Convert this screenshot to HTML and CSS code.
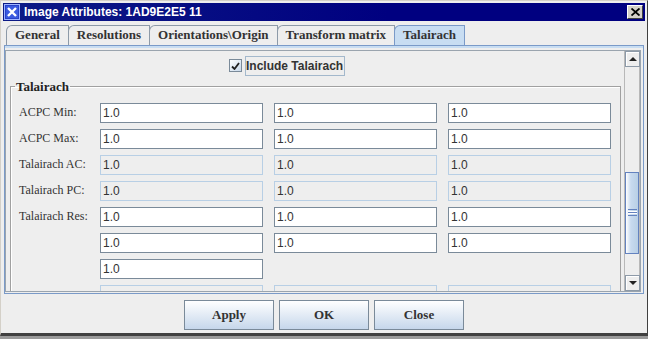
FILE: index.html
```html
<!DOCTYPE html>
<html lang="en">
<head>
    <meta charset="UTF-8">
    <title>Image Attributes</title>
    <link rel="stylesheet" href="styles.css">
</head>
<body>
    <div class="window">
        <!-- Title bar -->
        <div class="titlebar">
            <svg class="app-icon" width="16" height="16" viewBox="0 0 16 16">
                <rect x="0.5" y="0.5" width="15" height="15" fill="#2742c8" stroke="#9fb4ff"/>
                <rect x="2" y="2" width="12" height="12" fill="#3a5ae0"/>
                <path d="M4 4 L12 12 M12 4 L4 12" stroke="#fff" stroke-width="2.4"/>
            </svg>
            <span class="title">Image Attributes: 1AD9E2E5 11</span>
            <span class="close-btn">
                <svg width="9" height="8" viewBox="0 0 9 8">
                    <path d="M0.5 0.5 L8.5 7.5 M8.5 0.5 L0.5 7.5" stroke="#000" stroke-width="1.8"/>
                </svg>
            </span>
        </div>

        <!-- Tabs -->
        <div class="tabs">
            <div class="tab">General</div>
            <div class="tab">Resolutions</div>
            <div class="tab">Orientations\Origin</div>
            <div class="tab">Transform matrix</div>
            <div class="tab tab-active">Talairach</div>
        </div>

        <div class="tab-panel">
            <div class="scroll-pane">
                <div class="scroll-view">
                    <div class="check-row">
                        <span class="checkbox">
                            <svg width="9" height="8" viewBox="0 0 9 8">
                                <path d="M1 4.5 L3.5 7 L8 1" fill="none" stroke="#222" stroke-width="1.8"/>
                            </svg>
                        </span>
                        <span class="check-label">Include Talairach</span>
                    </div>

                    <fieldset class="group">
                        <legend>Talairach</legend>
                        <div class="field-grid">
                            <label>ACPC Min:</label>
                            <input type="text" value="1.0">
                            <input type="text" value="1.0">
                            <input type="text" value="1.0">

                            <label>ACPC Max:</label>
                            <input type="text" value="1.0">
                            <input type="text" value="1.0">
                            <input type="text" value="1.0">

                            <label>Talairach AC:</label>
                            <input type="text" value="1.0" class="off" disabled>
                            <input type="text" value="1.0" class="off" disabled>
                            <input type="text" value="1.0" class="off" disabled>

                            <label>Talairach PC:</label>
                            <input type="text" value="1.0" class="off" disabled>
                            <input type="text" value="1.0" class="off" disabled>
                            <input type="text" value="1.0" class="off" disabled>

                            <label>Talairach Res:</label>
                            <input type="text" value="1.0">
                            <input type="text" value="1.0">
                            <input type="text" value="1.0">

                            <label></label>
                            <input type="text" value="1.0">
                            <input type="text" value="1.0">
                            <input type="text" value="1.0">

                            <label></label>
                            <input type="text" value="1.0">
                            <span></span>
                            <span></span>

                            <label></label>
                            <input type="text" value="" class="off" disabled>
                            <input type="text" value="" class="off" disabled>
                            <input type="text" value="" class="off" disabled>
                        </div>
                    </fieldset>
                </div>

                <!-- Vertical scrollbar -->
                <div class="scrollbar">
                    <div class="sb-btn"><span class="arrow-up"></span></div>
                    <div class="sb-track">
                        <div class="sb-thumb"><span class="grip"></span></div>
                    </div>
                    <div class="sb-btn"><span class="arrow-down"></span></div>
                </div>
            </div>
        </div>

        <!-- Dialog buttons -->
        <div class="buttons">
            <button>Apply</button>
            <button>OK</button>
            <button>Close</button>
        </div>
    </div>
</body>
</html>
```

FILE: styles.css
```css
body {
    margin: 0;
    padding: 0;
    background: #9a9a9a;
    font-family: "Liberation Serif", serif;
}

.window {
    width: 648px;
    height: 336px;
    box-sizing: border-box;
    background: #eeeeee;
    border: 1px solid #d4d0c8;
    border-right-color: #404040;
    border-bottom: 3px solid #404040;
    padding: 2px 2px 0 2px;
    display: flex;
    flex-direction: column;
}

/* Title bar */
.titlebar {
    height: 18px;
    background: linear-gradient(to right, #0c1a86, #000080 60%);
    display: flex;
    align-items: center;
    padding: 0 2px 0 1px;
}

.app-icon {
    flex-shrink: 0;
}

.title {
    margin-left: 4px;
    color: #fff;
    font-family: "Liberation Sans", sans-serif;
    font-weight: bold;
    font-size: 12px;
    flex: 1;
}

.close-btn {
    width: 16px;
    height: 14px;
    box-sizing: border-box;
    background: #d4d0c8;
    border: 1px solid #fff;
    border-right-color: #404040;
    border-bottom-color: #404040;
    display: flex;
    align-items: center;
    justify-content: center;
}

/* Tabs */
.tabs {
    height: 24px;
    box-sizing: border-box;
    padding: 4px 0 0 3px;
    display: flex;
    align-items: flex-end;
}

.tab {
    height: 20px;
    box-sizing: border-box;
    padding: 0 8px;
    margin-right: -1px;
    border: 1px solid #8d9aa8;
    border-bottom: none;
    border-top-left-radius: 6px;
    background: #eeeeee;
    font-weight: bold;
    font-size: 13px;
    color: #333;
    display: flex;
    align-items: center;
    justify-content: center;
}

.tab-active {
    background: #c8ddf2;
    border-color: #7a9ac8;
}

/* Panel under the tabs */
.tab-panel {
    margin: 0 1px;
    border: 1px solid #7a9ac8;
    box-shadow: inset 0 2px 0 #c8ddf2;
    padding: 4px 2px 1px 0;
}

.scroll-pane {
    border: 1px solid #9aa4ae;
    height: 240px;
    display: flex;
}

.scroll-view {
    flex: 1;
    overflow: hidden;
}

.check-row {
    height: 30px;
    display: flex;
    align-items: center;
    padding-left: 223px;
}

.checkbox {
    width: 13px;
    height: 13px;
    box-sizing: border-box;
    border: 1px solid #7a8a99;
    background: linear-gradient(135deg, #ffffff, #c8d8ea);
    display: flex;
    align-items: center;
    justify-content: center;
}

.check-label {
    margin-left: 3px;
    padding: 2px 1px 2px 0;
    border: 1px solid #a3b8cc;
    font-family: "Liberation Sans", sans-serif;
    font-weight: bold;
    font-size: 12px;
    color: #333;
}

/* Titled group */
.group {
    margin: 0 4px;
    padding: 11px 8px 0 8px;
    border: 1px solid #a0a0a0;
    box-shadow: inset 1px 1px 0 #fff;
}

.group legend {
    margin-left: -4px;
    padding: 0 1px;
    font-weight: bold;
    font-size: 13px;
    line-height: 11px;
    color: #222;
}

.field-grid {
    display: grid;
    grid-template-columns: 70px 163px 163px 163px;
    grid-auto-rows: 20px;
    column-gap: 11px;
    row-gap: 6px;
}

.field-grid label {
    font-size: 12px;
    color: #333;
    display: flex;
    align-items: center;
    white-space: nowrap;
}

.field-grid input {
    width: 100%;
    height: 20px;
    box-sizing: border-box;
    margin: 0;
    padding: 0 2px;
    border: 1px solid #7a8a99;
    border-radius: 0;
    background: #fff;
    font-family: "Liberation Sans", sans-serif;
    font-size: 12px;
    color: #333;
    outline: none;
}

.field-grid input.off {
    background: #eeeeee;
    border-color: #b8cfe5;
    color: #333;
}

/* Scrollbar */
.scrollbar {
    width: 15px;
    display: flex;
    flex-direction: column;
    border-left: 1px solid #b8b8b8;
    margin-left: -1px;
}

.sb-btn {
    height: 16px;
    box-sizing: border-box;
    border: 1px solid #8d9aa8;
    background: #eeeeee;
    box-shadow: inset 1px 1px 0 #fff;
    display: flex;
    align-items: center;
    justify-content: center;
}

.arrow-up {
    width: 0;
    height: 0;
    border-left: 4px solid transparent;
    border-right: 4px solid transparent;
    border-bottom: 4px solid #222;
}

.arrow-down {
    width: 0;
    height: 0;
    border-left: 4px solid transparent;
    border-right: 4px solid transparent;
    border-top: 4px solid #222;
}

.sb-track {
    flex: 1;
    background: #eeeeee;
    padding-top: 105px;
    border-right: 1px solid #b8b8b8;
}

.sb-thumb {
    height: 82px;
    box-sizing: border-box;
    border: 1px solid #6382bf;
    background: linear-gradient(to right, #ffffff, #c8daef 40%, #b8cfe5);
    display: flex;
    align-items: center;
    justify-content: center;
}

.grip {
    width: 9px;
    height: 5px;
    border-top: 1px solid #6382bf;
    border-bottom: 1px solid #6382bf;
    background: linear-gradient(#fff 0 1px, #6382bf 1px 2px, #fff 2px 3px, transparent 3px);
    background-position: 0 1px;
    background-repeat: no-repeat;
}

/* Dialog buttons */
.buttons {
    height: 40px;
    box-sizing: border-box;
    padding-top: 6px;
    display: flex;
    justify-content: center;
    gap: 5px;
}

.buttons button {
    width: 90px;
    height: 30px;
    border: 1px solid #7a8a99;
    background: linear-gradient(#ffffff, #c6d7eb);
    font-family: "Liberation Serif", serif;
    font-weight: bold;
    font-size: 13px;
    color: #333;
    padding: 0;
}
```
